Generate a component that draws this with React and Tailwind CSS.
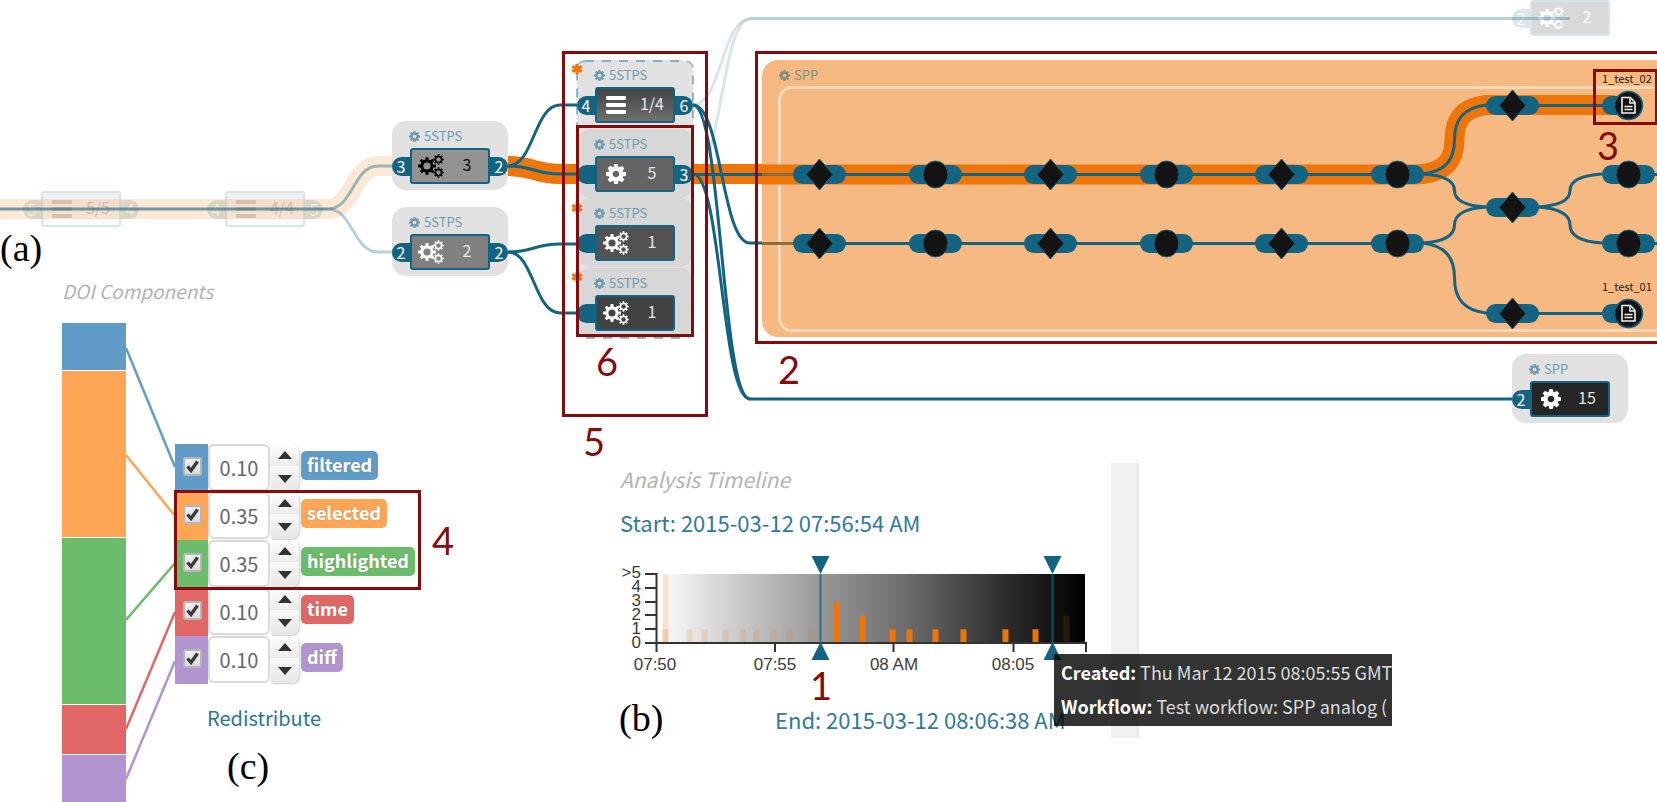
import React from "react";

const TEAL = "#136382";
const ORANGE = "#ee750a";

/* ---------- icons ---------- */

function gearPath(cx, cy, r, hole, teeth = 8) {
  const root = r * 0.74;
  const step = (Math.PI * 2) / teeth;
  const at = (radius, a) =>
    `${(cx + radius * Math.cos(a)).toFixed(2)} ${(cy + radius * Math.sin(a)).toFixed(2)}`;
  let d = "";
  for (let i = 0; i < teeth; i++) {
    const a = i * step;
    d += `${i ? "L" : "M"}${at(root, a - step * 0.3)}L${at(r, a - step * 0.2)}L${at(r, a + step * 0.2)}L${at(root, a + step * 0.3)}`;
  }
  return `${d}ZM${cx - hole} ${cy}a${hole} ${hole} 0 1 0 ${hole * 2} 0a${hole} ${hole} 0 1 0 ${-hole * 2} 0Z`;
}

const COG =
  "M1152 896q0-106-75-181t-181-75-181 75-75 181 75 181 181 75 181-75 75-181zm512-109v222q0 12-8 23t-20 13l-185 28q-19 54-39 91 35 50 107 138 10 12 10 25t-9 23q-27 37-99 108t-94 71q-12 0-26-9l-138-108q-44 23-91 38-16 136-29 186-7 28-36 28h-222q-14 0-24.5-8.5t-11.5-21.5l-28-184q-49-16-90-37l-141 107q-10 9-25 9-14 0-25-11-126-114-165-168-7-10-7-23 0-12 8-23 15-21 51-66.500t54-70.500q-27-50-41-99l-183-27q-13-2-21-12.500t-8-23.500v-222q0-12 8-23t19-13l186-28q14-46 39-92-40-57-107-138-10-12-10-24 0-10 9-23 26-36 98.500-107.500t94.500-71.500q13 0 26 10l138 107q44-23 91-38 16-136 29-186 7-28 36-28h222q14 0 24.500 8.500t11.500 21.500l28 184q49 16 90 37l142-107q9-9 24-9 13 0 25 10 129 119 165 170 7 8 7 22 0 12-8 23-15 21-51 66.500t-54 70.500q26 50 41 98l183 28q13 2 21 12.500t8 23.500z";

function Cog({ className }) {
  return (
    <svg viewBox="128 128 1536 1536" className={className} fill="currentColor" aria-hidden="true">
      <path d={COG} />
    </svg>
  );
}

function Cogs() {
  return (
    <svg width="26" height="24" viewBox="0 0 26 24" fill="currentColor" fillRule="evenodd" aria-hidden="true">
      <path d={gearPath(9, 12, 9, 3.6)} />
      <path d={gearPath(20.5, 5.5, 5.3, 2.3)} />
      <path d={gearPath(20.5, 18.5, 5.3, 2.3)} />
    </svg>
  );
}

function Menu() {
  return (
    <svg width="20" height="18" viewBox="0 0 20 18" fill="currentColor" aria-hidden="true">
      <rect y="0" width="20" height="4" rx="1" />
      <rect y="7" width="20" height="4" rx="1" />
      <rect y="14" width="20" height="4" rx="1" />
    </svg>
  );
}

const ICONS = { cogs: <Cogs />, cog: <Cog className="h-5 w-5" />, menu: <Menu /> };

/* ---------- diagram ---------- */

function GroupLabel({ text, className = "text-[#6e9cae]" }) {
  return (
    <div className={`flex h-4 items-center gap-1 text-[13px] leading-4 ${className}`}>
      <Cog className="h-[11px] w-[11px]" />
      <span>{text}</span>
    </div>
  );
}

function Node({ x, y, group, icon, value, left, right, tone, box, ink = "text-white", num = "text-[#e8e8e8]", port = "bg-[#136382]", edge = "border-[#136382]", portInk = "text-white" }) {
  return (
    <div className={`absolute flex h-[69px] w-[116px] flex-col justify-between rounded-[14px] pt-[7px] pb-[6px] ${tone}`} style={{ left: x, top: y - 45 }}>
      <div className="h-4 pl-[17px]">{group && <GroupLabel text={group} />}</div>
      <div className="flex items-center">
        <span className={`flex h-[19px] w-[18px] items-center justify-center rounded-l-full text-base leading-none ${left !== undefined ? port : ""} ${portInk}`}>{left}</span>
        <div className={`flex h-9 w-20 items-center rounded-[3px] border-2 ${box} ${edge} ${ink}`}>
          <span className="flex w-9 justify-center pl-[2px]">{ICONS[icon]}</span>
          <span className={`w-[38px] pb-1 text-center text-base leading-none ${num}`}>{value}</span>
        </div>
        <span className={`flex h-[19px] w-[18px] items-center justify-center rounded-r-full text-base leading-none ${right !== undefined ? port : ""} ${portInk}`}>{right}</span>
      </div>
    </div>
  );
}

const FADED = {
  tone: "", edge: "border-[#d5e5ea]", port: "bg-[#d9e7eb]", portInk: "text-white",
};

const NODES = [
  { x: 392, y: 166, group: "5STPS", icon: "cogs", value: "3", left: "3", right: "2", tone: "bg-[#e2e2e2]", box: "bg-[#929292]", ink: "text-black", num: "text-black" },
  { x: 392, y: 252, group: "5STPS", icon: "cogs", value: "2", left: "2", right: "2", tone: "bg-[#e2e2e2]", box: "bg-[#808080]" },
  { x: 577, y: 105, group: "5STPS", icon: "menu", value: "1/4", left: "4", right: "6", tone: "bg-[#e2e2e2]", box: "bg-linear-to-b from-[#434343] to-[#707070]" },
  { x: 577, y: 174, group: "5STPS", icon: "cog", value: "5", left: "", right: "3", tone: "bg-[#d7d7d7]", box: "bg-[#646464]" },
  { x: 577, y: 243, group: "5STPS", icon: "cogs", value: "1", left: "", tone: "bg-[#d7d7d7]", box: "bg-[#525252]" },
  { x: 577, y: 313, group: "5STPS", icon: "cogs", value: "1", left: "", tone: "bg-[#d7d7d7]", box: "bg-[#424242]" },
  { x: 1512, y: 399, group: "SPP", icon: "cog", value: "15", left: "2", tone: "bg-[#e2e2e2]", box: "bg-[#262626]" },
];

const curve = (x1, y1, x2, y2) => {
  const m = (x1 + x2) / 2;
  return `M${x1} ${y1}C${m} ${y1} ${m} ${y2} ${x2} ${y2}`;
};

const bend = (x1, y1, x2, y2) => {
  const m = (x1 + x2) / 2;
  const h = (y2 - y1) / 2;
  return `M${x1} ${y1}C${x1 + 22} ${y1 + h * 0.08} ${m} ${y1 + h * 0.4} ${m} ${y1 + h}C${m} ${y2 - h * 0.4} ${x2 - 22} ${y2 - h * 0.08} ${x2} ${y2}`;
};

const COLS = [819, 935, 1050, 1166, 1281, 1397];

const STEPS = [
  ...[174, 243].flatMap((y) => COLS.map((x, i) => ({ x, y, kind: i % 2 ? "circle" : "diamond" }))),
  { x: 1512, y: 105, kind: "diamond" },
  { x: 1512, y: 207, kind: "diamond" },
  { x: 1512, y: 313, kind: "diamond" },
  { x: 1628, y: 105, kind: "file" },
  { x: 1628, y: 174, kind: "circle" },
  { x: 1628, y: 243, kind: "circle" },
  { x: 1628, y: 313, kind: "file" },
];

function Step({ x, y, kind }) {
  return (
    <g transform={`translate(${x + 0.5} ${y + 0.5})`}>
      <rect x="-26.5" y="-9.5" width={kind === "file" ? 30 : 53} height="19" rx="9.5" fill={TEAL} />
      {kind === "diamond" && <path d="M0-15.500L13.500 0L0 15.500L-13.500 0Z" fill="#141414" stroke={TEAL} strokeWidth="1" />}
      {kind === "circle" && <ellipse rx="12.5" ry="13.5" fill="#141414" stroke={TEAL} strokeWidth="1" />}
      {kind === "file" && (
        <>
          <circle r="14" fill="#141414" stroke={TEAL} strokeWidth="1.5" />
          <path d="M-6.500-8H2L6.500-3V7.500H-6.500Z" fill="none" stroke="#f2f2f2" strokeWidth="1.6" strokeLinejoin="round" />
          <path d="M1.500-8V-2.500H6.500" fill="none" stroke="#f2f2f2" strokeWidth="1.500" />
          <path d="M-4 1H4M-4 4H4" stroke="#f2f2f2" strokeWidth="1.500" />
        </>
      )}
    </g>
  );
}

function Asterisk({ y }) {
  return (
    <svg className="absolute left-[571px]" style={{ top: y }} width="12" height="12" viewBox="-6 -6 12 12" aria-hidden="true">
      <path d="M0-5.300V5.300M-4.800-2.700L4.800 2.700M-4.800 2.700L4.800-2.700" stroke={ORANGE} strokeWidth="3.2" />
    </svg>
  );
}

function Diagram() {
  return (
    <section aria-label="Provenance graph" className="absolute inset-x-0 top-0 h-[440px] overflow-hidden">
      <Node {...FADED} x={23} y={209} icon="menu" value="5/5" left="5" right="4" box="bg-linear-to-b from-[#efefef] to-[#fcfcfc]" ink="text-[#cfcfcf]" num="text-[#cccccc]" />
      <Node {...FADED} x={207} y={209} icon="menu" value="4/4" left="4" right="5" box="bg-linear-to-b from-[#efefef] to-[#fcfcfc]" ink="text-[#cfcfcf]" num="text-[#cccccc]" />
      <Node {...FADED} x={1512} y={18} icon="cogs" value="2" left="2" box="bg-[#d9d9d9]" num="text-white" />

      <svg className="absolute inset-0 h-full w-full" fill="none" aria-hidden="true">
        <path d="M0 209H328C353 209 353 166 378 166H393" stroke={ORANGE} strokeWidth="20" strokeOpacity="0.17" />
        <path d="M0 209H328" stroke={TEAL} strokeWidth="3" strokeOpacity="0.6" />
        <path d="M328 209C353 209 353 166 378 166H393" stroke={TEAL} strokeWidth="3" strokeOpacity="0.4" />
        <path d="M328 209C353 209 353 252 378 252H393" stroke={TEAL} strokeWidth="3" strokeOpacity="0.3" />

        <g stroke={TEAL} strokeWidth="3" strokeOpacity="0.16">
          <path d={curve(693, 105, 750, 19)} />
          <path d={curve(693, 174, 750, 19)} />
        </g>
        <path d="M750 18.500H1570" stroke={TEAL} strokeWidth="3" strokeOpacity="0.3" />

        <path d={`${curve(508, 166, 560, 174)}H577M693 174H762`} stroke={ORANGE} strokeWidth="20" />
        <g stroke={TEAL} strokeWidth="3">
          <path d={`${curve(508, 166, 560, 105)}H577`} />
          <path d={`${curve(508, 166, 560, 174)}H577`} />
          <path d={`${curve(508, 252, 560, 244)}H577`} />
          <path d={`${curve(508, 252, 560, 313)}H577`} />
          <path d={`${curve(693, 105, 750, 243)}H762`} />
          <path d={`${curve(693, 105, 750, 399)}H1512`} />
          <path d={curve(693, 174, 750, 399)} />
          <path d="M693 174.500H762" />
        </g>
      </svg>

      <div className="absolute top-[60px] left-[577px] h-[278px] w-[116px] rounded-[14px] bg-[#e2e2e2]" />
      {NODES.map((n) => (
        <Node key={`${n.x}-${n.y}`} {...n} />
      ))}
      <svg className="absolute inset-0 h-full w-full" fill="none" aria-hidden="true">
        <rect x="577" y="61" width="116" height="277" rx="8" stroke={TEAL} strokeOpacity="0.42" strokeWidth="2" strokeDasharray="9 8" />
      </svg>
      <Asterisk y={63} />
      <Asterisk y={202} />
      <Asterisk y={271} />

      <div className="absolute top-[60px] -right-10 left-[762px] h-[277px] rounded-2xl bg-[#f5b981] pt-[7px] pl-4">
        <div className="pl-[1px]">
          <GroupLabel text="SPP" className="text-[#7f8f86]" />
        </div>
        <div className="mt-[3px] h-[246px] rounded-[14px] border-[3px] border-[#f9d8bb]" />
      </div>

      <svg className="absolute inset-0 h-full w-full" fill="none" aria-hidden="true">
        <path d={`M762 174.500H1415L1423 174${bend(1423, 174, 1486, 105).replace("M1423 174", "")}H1615`} stroke={ORANGE} strokeWidth="20" />
        <path d="M762 174.500H795M762 243.500H795" stroke="#8a6f45" strokeWidth="3" />
        <g stroke={TEAL} strokeWidth="3">
          <path d="M794 174.500H1423M794 243.500H1423M1486 105.500H1610M1486 313.500H1610M1628 174.500H1700M1628 243.500H1700" />
          <path d={bend(1423, 174, 1486, 105)} />
          <path d={bend(1423, 174, 1486, 207)} />
          <path d={bend(1423, 243, 1486, 207)} />
          <path d={bend(1423, 243, 1486, 313)} />
          <path d={bend(1538, 207, 1602, 174)} />
          <path d={bend(1538, 207, 1602, 243)} />
        </g>
        {STEPS.map((s) => (
          <Step key={`${s.x}-${s.y}`} {...s} />
        ))}
      </svg>
      <span className="absolute top-[70px] left-[1602px] text-[11px] leading-4 text-[#1a1a1a]">1_test_02</span>
      <span className="absolute top-[278px] left-[1602px] text-[11px] leading-4 text-[#1a1a1a]">1_test_01</span>
    </section>
  );
}

/* ---------- DOI components ---------- */

const DOI = [
  { name: "filtered", value: "0.10", color: "bg-[#619cc8]", bar: "h-[47px]", line: "#619cc8", from: 25, to: 144 },
  { name: "selected", value: "0.35", color: "bg-[#ffa556]", bar: "h-[166px]", line: "#ffa556", from: 132, to: 193 },
  { name: "highlighted", value: "0.35", color: "bg-[#6bbc6b]", bar: "h-[166px]", line: "#6bbc6b", from: 297, to: 240 },
  { name: "time", value: "0.10", color: "bg-[#e16666]", bar: "h-[49px]", line: "#e16666", from: 406, to: 289 },
  { name: "diff", value: "0.10", color: "bg-[#b194d0]", bar: "h-12", line: "#b194d0", from: 456, to: 338 },
];

function Arrow({ down }) {
  return (
    <svg width="14" height="8" viewBox="0 0 14 8" fill="#333" aria-hidden="true">
      <path d={down ? "M0 0H14L7 8Z" : "M0 8H14L7 0Z"} />
    </svg>
  );
}

function DoiRow({ name, value, color }) {
  return (
    <div className="flex h-12 items-start">
      <div className={`flex h-full w-[33px] items-start justify-center pt-[13px] pl-[2px] ${color}`}>
        <label className="relative block h-[19px] w-[19px]">
          <input type="checkbox" defaultChecked aria-label={`Use ${name}`} className="block h-[19px] w-[19px] appearance-none rounded-[2px] border-2 border-[#b5b5b5] bg-linear-to-b from-[#efefef] to-[#dcdcdc]" />
          <svg className="pointer-events-none absolute inset-0" width="19" height="19" viewBox="0 0 19 19" fill="none" aria-hidden="true">
            <path d="M4.500 9.500L8 13.500L14.500 4.500" stroke="#3a3a3a" strokeWidth="3.400" />
          </svg>
        </label>
      </div>
      <input type="text" defaultValue={value} aria-label={`${name} weight`} className="h-[47px] w-[62px] rounded-md border-2 border-[#d9d9d9] bg-white text-center text-[20px] text-[#666]" />
      <div className="mr-[2px] ml-px flex h-[47px] w-7 flex-col rounded-r-lg shadow-[1px_1px_2px_#cccccc]">
        <button type="button" aria-label={`Increase ${name}`} className="flex h-[22px] items-center justify-center rounded-tr-lg bg-linear-to-b from-white to-[#ebebeb]">
          <Arrow />
        </button>
        <button type="button" aria-label={`Decrease ${name}`} className="flex h-[25px] items-center justify-center rounded-br-lg bg-linear-to-b from-[#f8f8f8] to-[#e6e6e6]">
          <Arrow down />
        </button>
      </div>
      <span className={`mt-[7px] h-[29px] rounded-[5px] px-[6px] text-[18px] leading-[27px] font-bold text-white [text-shadow:0_0_2px_#8888] ${color}`}>{name}</span>
    </div>
  );
}

function DoiPanel() {
  return (
    <section className="relative mt-[278px] ml-[62px] w-[380px]">
      <h2 className="h-[45px] text-[19px] leading-[26px] text-[#b3b3b3] italic">DOI Components</h2>
      <div className="flex items-start">
        <div className="flex w-16 flex-col gap-px">
          {DOI.map((d) => (
            <div key={d.name} className={`${d.color} ${d.bar}`} />
          ))}
        </div>
        <svg width="49" height="479" fill="none" aria-hidden="true">
          {DOI.map((d) => (
            <path key={d.name} d={`M0 ${d.from}L49 ${d.to}`} stroke={d.line} strokeWidth="2.5" />
          ))}
        </svg>
        <div className="flex flex-col items-start pt-[121px]">
          {DOI.map((d) => (
            <DoiRow key={d.name} {...d} />
          ))}
          <button type="button" className="mt-5 ml-8 text-[20px] leading-7 text-[#2b7597]">Redistribute</button>
          <p className="mt-[14px] ml-[52px] font-['Liberation_Serif',serif] text-[38px] leading-10 text-black">(c)</p>
        </div>
      </div>
    </section>
  );
}

/* ---------- timeline ---------- */

const BARS = [
  [665, 5, 0.16], [665, 1, 0.2], [689, 1, 0.17], [704, 1, 0.17], [725, 1, 0.17], [742, 1, 0.17], [756, 1, 0.17],
  [773, 1, 0.17], [789, 1, 0.17], [811, 1, 0.17], [836, 3, 1], [862, 2, 1], [892, 1, 1], [909, 1, 1],
  [935, 1, 1], [963, 1, 1], [1005, 1, 1], [1035, 1, 1], [1066, 2, 0.14],
];

function Chart() {
  return (
    <svg viewBox="620 550 490 128" className="block h-32 w-[490px]" role="img" aria-label="Analyses per minute">
      <defs>
        <linearGradient id="age" x1="0" x2="1">
          <stop offset="0" stopColor="#fafafa" />
          <stop offset="0.38" stopColor="#979797" />
          <stop offset="0.57" stopColor="#6e6e6e" />
          <stop offset="0.8" stopColor="#303030" />
          <stop offset="1" stopColor="#000" />
        </linearGradient>
      </defs>
      <rect x="662" y="574" width="423" height="69" fill="url(#age)" />
      {BARS.map(([x, n, o]) => (
        <rect key={`${x}-${n}`} x={x - 2.5} y={643 - n * 13.7} width="6" height={n * 13.7} fill={ORANGE} fillOpacity={o} />
      ))}
      <path d="M645 574H656.500V652M645 588H656M645 602H656M645 615H656M645 629H656M645 643H1086V652M775 643V652M893.500 643V652M1013.500 643V652" fill="none" stroke="#333" strokeWidth="2" />
      <g fill="#3c3c3c" fontSize="17" className="font-['Liberation_Sans',sans-serif]">
        <g textAnchor="end">
          {["0", "1", "2", "3", "4", ">5"].map((t, i) => (
            <text key={t} x="641" y={648 - i * 14}>{t}</text>
          ))}
        </g>
        <g textAnchor="middle">
          <text x="655" y="670">07:50</text>
          <text x="775" y="670">07:55</text>
          <text x="894" y="670">08 AM</text>
          <text x="1013" y="670">08:05</text>
        </g>
      </g>
      {[820.5, 1052.5].map((x) => (
        <g key={x} fill={TEAL}>
          <rect x={x - 1} y="574" width="2" height="69" fillOpacity="0.75" />
          <path d={`M${x - 9} 556H${x + 9}L${x} 574Z`} />
          <path d={`M${x - 9} 660H${x + 9}L${x} 642Z`} />
        </g>
      ))}
    </svg>
  );
}

function Timeline() {
  return (
    <section className="relative mt-[463px] ml-[178px] flex h-[275px]">
      <div className="w-[491px]">
        <h2 className="pt-[3px] text-[21px] leading-[26px] text-[#b3b3b3] italic">Analysis Timeline</h2>
        <p className="mt-[17px] mb-[15px] text-[22px] leading-[26px] text-[#2f7a9e]">Start: 2015-03-12 07:56:54 AM</p>
        <Chart />
        <div className="mt-7 pl-[155px] text-[22px] leading-[26px] whitespace-nowrap text-[#2f7a9e]">End: 2015-03-12 08:06:38 AM</div>
      </div>
      <div className="w-7 border-r-2 border-[#e8e8e8] bg-[#f0f0f0]" />
      <div role="tooltip" className="absolute top-[191px] left-[434px] h-[72px] w-[338px] overflow-hidden bg-[#000000cc] pt-px pl-[7px] text-[18px] leading-[34px] whitespace-nowrap text-[#dddddd]">
        <p><b className="text-white">Created:</b> Thu Mar 12 2015 08:05:55 GMT</p>
        <p><b className="text-white">Workflow:</b> Test workflow: SPP analog (</p>
      </div>
    </section>
  );
}

/* ---------- annotations ---------- */

function Annotations() {
  const num = "absolute font-['Lato',sans-serif] text-[38px] leading-10 text-[#850c0c]";
  const box = "absolute border-[3px] border-[#850c0c]";
  const letter = "absolute font-['Liberation_Serif',serif] text-[38px] leading-10 text-black";
  return (
    <div className="pointer-events-none absolute inset-0 overflow-hidden">
      <div className={`${box} top-[51px] left-[562px] h-[366px] w-[146px]`} />
      <div className={`${box} top-[125px] left-[576px] h-[212px] w-[118px]`} />
      <div className={`${box} top-[51px] -right-10 left-[755px] h-[293px]`} />
      <div className={`${box} top-[69px] left-[1593px] h-14 w-[65px]`} />
      <div className={`${box} top-[490px] left-[174px] h-[100px] w-[247px]`} />
      <span className={`${num} top-[665px] left-[810px]`}>1</span>
      <span className={`${num} top-[349px] left-[778px]`}>2</span>
      <span className={`${num} top-[125px] left-[1597px]`}>3</span>
      <span className={`${num} top-[520px] left-[432px]`}>4</span>
      <span className={`${num} top-[421px] left-[583px]`}>5</span>
      <span className={`${num} top-[341px] left-[596px]`}>6</span>
      <span className={`${letter} top-[228px] left-0`}>(a)</span>
      <span className={`${letter} top-[698px] left-[619px]`}>(b)</span>
    </div>
  );
}

export default function App() {
  return (
    <main className="relative flex h-screen items-start overflow-hidden bg-white font-['Noto_Sans_CJK_SC','Source_Sans_Pro',sans-serif]">
      <Diagram />
      <DoiPanel />
      <Timeline />
      <Annotations />
    </main>
  );
}
